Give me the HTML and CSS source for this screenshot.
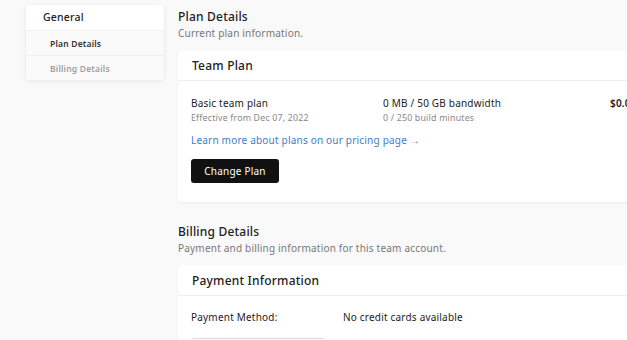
FILE: index.html
```html
<!DOCTYPE html>
<html lang="en">
<head>
    <meta charset="UTF-8" />
    <title>Team Settings - Billing</title>
    <link rel="stylesheet" href="styles.css">
</head>
<body>
    <div class="page">
        <nav class="side-nav">
            <div class="nav-group">General</div>
            <div class="nav-item active">Plan Details</div>
            <div class="nav-item">Billing Details</div>
        </nav>

        <main class="content">
            <section class="section">
                <h2 class="section-title">Plan Details</h2>
                <p class="section-sub">Current plan information.</p>
                <div class="card">
                    <div class="card-header">Team Plan</div>
                    <div class="card-body">
                        <div class="plan-row">
                            <div class="plan-col">
                                <div class="plan-main">Basic team plan</div>
                                <div class="plan-meta">Effective from Dec 07, 2022</div>
                            </div>
                            <div class="plan-col wide">
                                <div class="plan-main">0 MB / 50 GB bandwidth</div>
                                <div class="plan-meta">0 / 250 build minutes</div>
                            </div>
                            <div class="plan-price">$0.00</div>
                        </div>
                        <a class="plan-link" href="#">Learn more about plans on our pricing page &rarr;</a>
                        <button class="btn-dark">Change Plan</button>
                    </div>
                </div>
            </section>

            <section class="section">
                <h2 class="section-title">Billing Details</h2>
                <p class="section-sub">Payment and billing information for this team account.</p>
                <div class="card">
                    <div class="card-header">Payment Information</div>
                    <div class="card-body">
                        <div class="pay-row">
                            <span class="pay-label">Payment Method:</span>
                            <span class="pay-value">No credit cards available</span>
                        </div>
                        <button class="btn-outline">Add Payment Method</button>
                    </div>
                </div>
            </section>
        </main>
    </div>
</body>
</html>
```

FILE: styles.css
```css
* {
    box-sizing: border-box;
}

body {
    margin: 0;
    font-family: 'Noto Sans', 'Open Sans', sans-serif;
    background: #f9f9f9;
    color: #222;
    overflow: hidden;
    height: 340px;
    letter-spacing: 0.2px;
}

.page {
    display: flex;
    align-items: flex-start;
    gap: 14px;
    padding: 5px 0 0 26px;
}

.side-nav {
    width: 138px;
    flex-shrink: 0;
    background: #fff;
    border-radius: 3px;
    box-shadow: 0 1px 4px rgba(0, 0, 0, 0.08);
    overflow: hidden;
}

.nav-group {
    height: 25px;
    line-height: 25px;
    padding-left: 17px;
    font-size: 10.5px;
    font-weight: 500;
    color: #222;
}

.nav-item {
    height: 25px;
    line-height: 25px;
    padding-left: 24px;
    font-size: 8.5px;
    font-weight: 600;
    color: #a0a0a0;
    background: #fafafa;
    border-top: 1px solid #efefef;
}

.nav-item.active {
    color: #333;
}

.content {
    width: 476px;
    flex-shrink: 0;
}

.section {
    margin-bottom: 18px;
}

.section-title {
    margin: 0;
    font-size: 12px;
    font-weight: 500;
    line-height: 16px;
    padding-top: 4px;
}

.section-sub {
    margin: 0;
    font-size: 10px;
    line-height: 16px;
    color: #777;
}

.card {
    margin-top: 9px;
    background: #fff;
    border-radius: 4px;
    box-shadow: 0 1px 3px rgba(0, 0, 0, 0.05);
}

.card-header {
    height: 31px;
    line-height: 31px;
    padding: 0 14px;
    font-size: 12px;
    font-weight: 500;
    border-bottom: 1px solid #f0f0f0;
}

.card-body {
    padding: 14px 13px 19px;
}

.plan-row {
    display: flex;
    align-items: flex-start;
}

.plan-col {
    width: 192px;
    flex-shrink: 0;
}

.plan-col.wide {
    width: 227px;
}

.plan-main {
    font-size: 10px;
    line-height: 16px;
    color: #222;
}

.plan-meta {
    font-size: 8.8px;
    line-height: 14px;
    color: #888;
}

.plan-price {
    font-size: 10px;
    line-height: 16px;
    font-weight: 600;
    white-space: nowrap;
}

.plan-link {
    display: block;
    margin-top: 7px;
    font-size: 10px;
    line-height: 16px;
    color: #3a7fcc;
    text-decoration: none;
}

.btn-dark {
    display: block;
    margin-top: 11px;
    width: 88px;
    height: 24px;
    border: none;
    border-radius: 3px;
    background: #111;
    color: #fff;
    font-family: inherit;
    font-size: 10px;
    letter-spacing: 0.2px;
    cursor: pointer;
}

.pay-row {
    display: flex;
    margin-top: -1px;
    font-size: 10px;
    line-height: 16px;
}

.pay-label {
    width: 152px;
}

.btn-outline {
    display: block;
    margin-top: 13px;
    width: 134px;
    height: 24px;
    border: 1px solid #ddd;
    border-radius: 3px;
    background: #fff;
    color: #222;
    font-family: inherit;
    font-size: 10px;
}
```
